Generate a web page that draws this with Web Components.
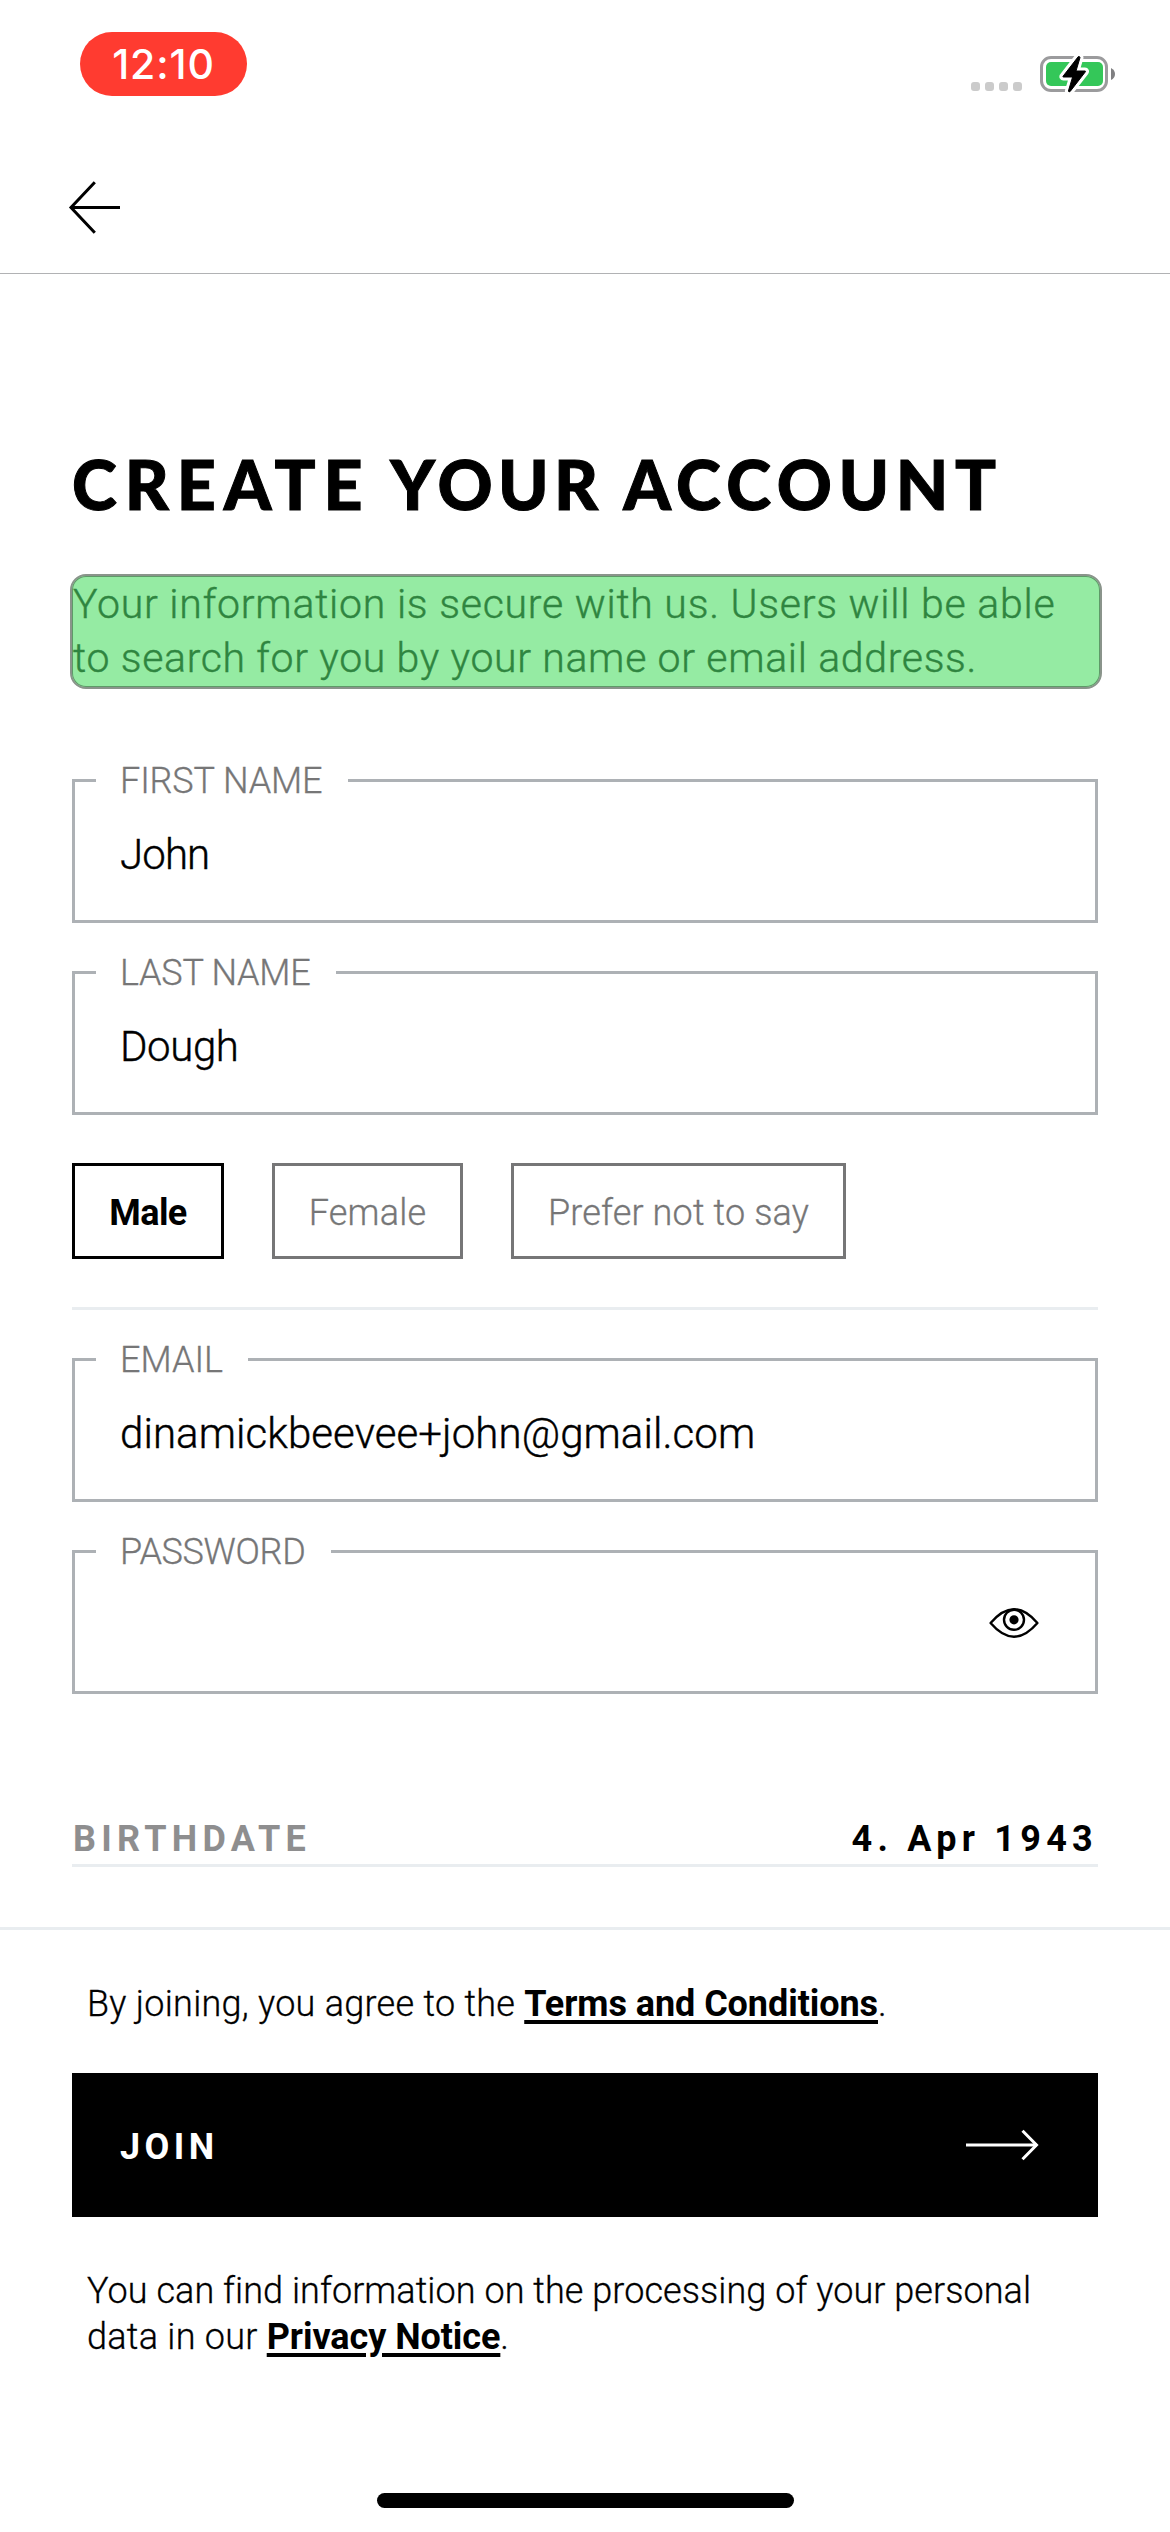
<!DOCTYPE html>
<html lang="en">
<head>
<meta charset="utf-8">
<title>Create your account</title>
<style>
  html, body { margin: 0; background: #fff; }
  body { font-family: Roboto, "Liberation Sans", sans-serif; color: #000; }
</style>
</head>
<body>
<signup-screen></signup-screen>

<script>
const define = (name, html, setup) => customElements.define(name, class extends HTMLElement {
  connectedCallback() {
    if (this.shadowRoot) return;
    const root = this.attachShadow({ mode: 'open' });
    const tpl = document.createElement('template');
    tpl.innerHTML = html;
    root.append(tpl.content.cloneNode(true));
    if (setup) setup(this, root);
  }
});

define('status-bar', `
  <style>
    :host { display: flex; justify-content: space-between; align-items: flex-start; box-sizing: border-box; height: 132px; padding: 32px 55px 0 80px; }
    .time { width: 167px; height: 64px; border-radius: 32px; background: #ff3b30; color: #fff; text-align: center;
            font: 500 41px/64px Inter, sans-serif; letter-spacing: .9px; }
    .right { display: flex; gap: 18px; padding-top: 22px; }
    .dots { display: flex; gap: 5px; padding-top: 28px; }
    .dots i { width: 9px; height: 9px; border-radius: 3px; background: #cbcbcb; }
    svg { display: block; }
  </style>
  <div class="time">12:10</div>
  <div class="right">
    <div class="dots"><i></i><i></i><i></i><i></i></div>
    <svg width="75" height="40" viewBox="0 0 75 40">
      <rect x="1.5" y="3.5" width="65" height="33" rx="9.5" fill="none" stroke="#9b9b9d" stroke-width="3"/>
      <rect x="6" y="8" width="57" height="24" rx="5" fill="#34c759"/>
      <path d="M71 14 Q75 16 75 20 Q75 24 71 26 Z" fill="#808082"/>
      <path d="M38.3 2.6 L23 22.3 Q22.6 23 23.4 23 L32.6 23 L28.4 37 Q28.8 38.6 30.2 37.4 L45.4 17.8 Q45.8 17 45 17 L36 17 L40 3.6 Q39.6 2 38.3 2.6 Z" fill="#fff" stroke="#fff" stroke-width="7" stroke-linejoin="round"/>
      <path d="M38.3 2.6 L23 22.3 Q22.6 23 23.4 23 L32.6 23 L28.4 37 Q28.8 38.6 30.2 37.4 L45.4 17.8 Q45.8 17 45 17 L36 17 L40 3.6 Q39.6 2 38.3 2.6 Z" fill="#000" stroke="#000" stroke-width="1" stroke-linejoin="round"/>
    </svg>
  </div>`);

define('nav-header', `
  <style>
    :host { display: flex; align-items: flex-start; box-sizing: border-box; height: 142px; padding: 47px 0 0 67px; border-bottom: 1px solid #b1b2b4; }
    svg { display: block; }
  </style>
  <svg width="56" height="58" viewBox="0 0 56 58" fill="none" stroke="#000" stroke-width="3">
    <path d="M4 28.5 H53"/><path d="M27.8 3.2 L4 28.5 L27.8 53.8"/>
  </svg>`);

define('info-note', `
  <style>
    :host { display: block; box-sizing: border-box; height: 115px; margin: 0 -4px 0 -2px; padding: 1px 0; border: 2px solid #8a948b; border-radius: 16px;
            background: #95eba3; box-shadow: inset 0 0 0 1px #5e9a68; color: #2f8540; -webkit-text-stroke: .4px #2f8540;
            font-size: 41px; font-weight: 300; line-height: 53.5px; letter-spacing: .76px; white-space: nowrap; }
    div { padding: 1px 0 0 1px; }
  </style>
  <div><slot></slot></div>`);

define('text-field', `
  <style>
    :host { display: flex; flex-direction: column; box-sizing: border-box; height: 144px; }
    .top { display: flex; height: 3px; flex: none; }
    .stub { width: 24px; background: #adb1b5; }
    .rest { flex: 1; background: #adb1b5; }
    .label { box-sizing: border-box; width: var(--label-w); padding-left: 24px; color: #767677; font-size: 36px; font-weight: 300; line-height: 5px; white-space: nowrap; letter-spacing: var(--label-ls, 0); -webkit-text-stroke: .3px #767677; }
    .body { flex: 1; display: flex; align-items: center; justify-content: space-between; border: solid #adb1b5; border-width: 0 3px 3px; padding: 0 54px 0 45px; }
    .value { padding-top: 7px; font-size: 42px; font-weight: 300; line-height: 50px; letter-spacing: var(--value-ls, 0); -webkit-text-stroke: .4px #000; }
  </style>
  <div class="top"><span class="stub"></span><span class="label"></span><span class="rest"></span></div>
  <div class="body"><span class="value"></span><slot></slot></div>`,
  (el, root) => {
    root.querySelector('.label').textContent = el.getAttribute('label');
    root.querySelector('.value').textContent = el.getAttribute('value') || '';
  });

define('eye-icon', `
  <style>:host { display: block; padding-top: 2px; } svg { display: block; }</style>
  <svg width="54" height="34" viewBox="0 0 54 34" fill="none" stroke="#000" stroke-width="2.4">
    <path d="M3.6 17 Q27 -10.6 50.4 17 Q27 44.4 3.6 17 Z" stroke-linejoin="round"/>
    <circle cx="27" cy="13.8" r="10"/><circle cx="27" cy="13.8" r="4.6" fill="#000" stroke="none"/>
  </svg>`);

define('choice-chip', `
  <style>
    :host { display: flex; justify-content: center; align-items: center; box-sizing: border-box; height: 96px; padding-top: 4px; border: 3px solid #767677; color: #767677;
            font-size: 36px; font-weight: 300; line-height: 42px; white-space: nowrap; letter-spacing: .15px; -webkit-text-stroke: .3px #767677; }
    :host([selected]) { border-color: #000; color: #000; font-weight: 700; letter-spacing: -.6px; -webkit-text-stroke: 0; }
  </style>
  <slot></slot>`);

define('birthdate-row', `
  <style>
    :host { display: flex; justify-content: space-between; box-sizing: border-box; height: 51px; border-bottom: 3px solid #e9edf0;
            font-size: 36px; font-weight: 700; line-height: 46px; letter-spacing: 5.25px; white-space: nowrap; }
    .label { color: #8e8e8f; padding-left: 1px; }
  </style>
  <span class="label">BIRTHDATE</span><span><slot></slot></span>`);

define('join-button', `
  <style>
    :host { display: flex; justify-content: space-between; align-items: center; box-sizing: border-box; height: 144px; padding: 0 58px 0 48px; background: #000; color: #fff;
            font-size: 36px; font-weight: 700; line-height: 42px; letter-spacing: 4.4px; }
    span { padding-top: 4px; }
    svg { display: block; }
  </style>
  <span><slot></slot></span>
  <svg width="74" height="32" viewBox="0 0 74 32" fill="none" stroke="#fff" stroke-width="3">
    <path d="M0 16 H71"/><path d="M56.5 1.8 L70.5 16 L56.5 30.2"/>
  </svg>`);

define('legal-text', `
  <style>
    :host { display: block; padding-left: 15px; font-size: 36px; font-weight: 300; line-height: 46px; white-space: nowrap; -webkit-text-stroke: .3px #000; }
    ::slotted(b) { font-weight: 700; letter-spacing: -.07px; -webkit-text-stroke: 0; text-decoration: underline; text-decoration-thickness: 4px; text-underline-offset: 4px; }
  </style>
  <slot></slot>`);

define('signup-screen', `
  <style>
    :host { display: flex; flex-direction: column; width: 1170px; height: 2532px; background: #fff; overflow: hidden; }
    main { padding: 0 72px; }
    h1 { margin: 170px 0 50px; font: 900 68px/80px Lato, sans-serif; letter-spacing: 6.6px; white-space: nowrap; -webkit-text-stroke: 1px #000; }
    .fields { display: flex; flex-direction: column; gap: 48px; margin-top: 90px; }
    .chips { display: flex; gap: 48px; }
    hr { margin: 0; border: 0; height: 3px; background: #e9edf0; }
    birthdate-row { margin-top: 122px; }
    footer { margin-top: 60px; padding: 51px 72px 0; border-top: 3px solid #e9edf0; }
    join-button { margin: 46px 0 51px; }
    .home { width: 417px; height: 15px; margin: auto auto 24px; border-radius: 8px; background: #000; }
  </style>
  <status-bar></status-bar>
  <nav-header></nav-header>
  <main>
    <h1><span style="letter-spacing:7.9px;margin-right:-4.2px">CREATE </span><span style="letter-spacing:5.4px;margin-right:-2px">YOUR </span>ACCOUNT</h1>
    <info-note>Your information is secure with us. Users will be able<br><span style="letter-spacing:.65px">to search for you by your name or email address.</span></info-note>
    <div class="fields">
      <text-field label="FIRST NAME" value="John" style="--label-w:252px;--label-ls:-.12px;--value-ls:-.9px"></text-field>
      <text-field label="LAST NAME" value="Dough" style="--label-w:240px;--label-ls:-.25px;--value-ls:-.4px"></text-field>
      <div class="chips">
        <choice-chip selected style="width:152px">Male</choice-chip>
        <choice-chip style="width:191px">Female</choice-chip>
        <choice-chip style="width:335px">Prefer not to say</choice-chip>
      </div>
      <hr>
      <text-field label="EMAIL" value="dinamickbeevee+john@gmail.com" style="--label-w:152px;--value-ls:.08px"></text-field>
      <text-field label="PASSWORD" style="--label-w:235px;--label-ls:-.33px"><eye-icon></eye-icon></text-field>
    </div>
    <birthdate-row>4. Apr 1943</birthdate-row>
  </main>
  <footer>
    <legal-text style="letter-spacing:.27px">By joining, you agree to the <b>Terms and Conditions</b>.</legal-text>
    <join-button>JOIN</join-button>
    <legal-text style="letter-spacing:.06px">You can find information on the processing of your personal<br><span style="letter-spacing:.27px">data in our </span><b>Privacy Notice</b>.</legal-text>
  </footer>
  <div class="home"></div>`);
</script>
</body>
</html>
